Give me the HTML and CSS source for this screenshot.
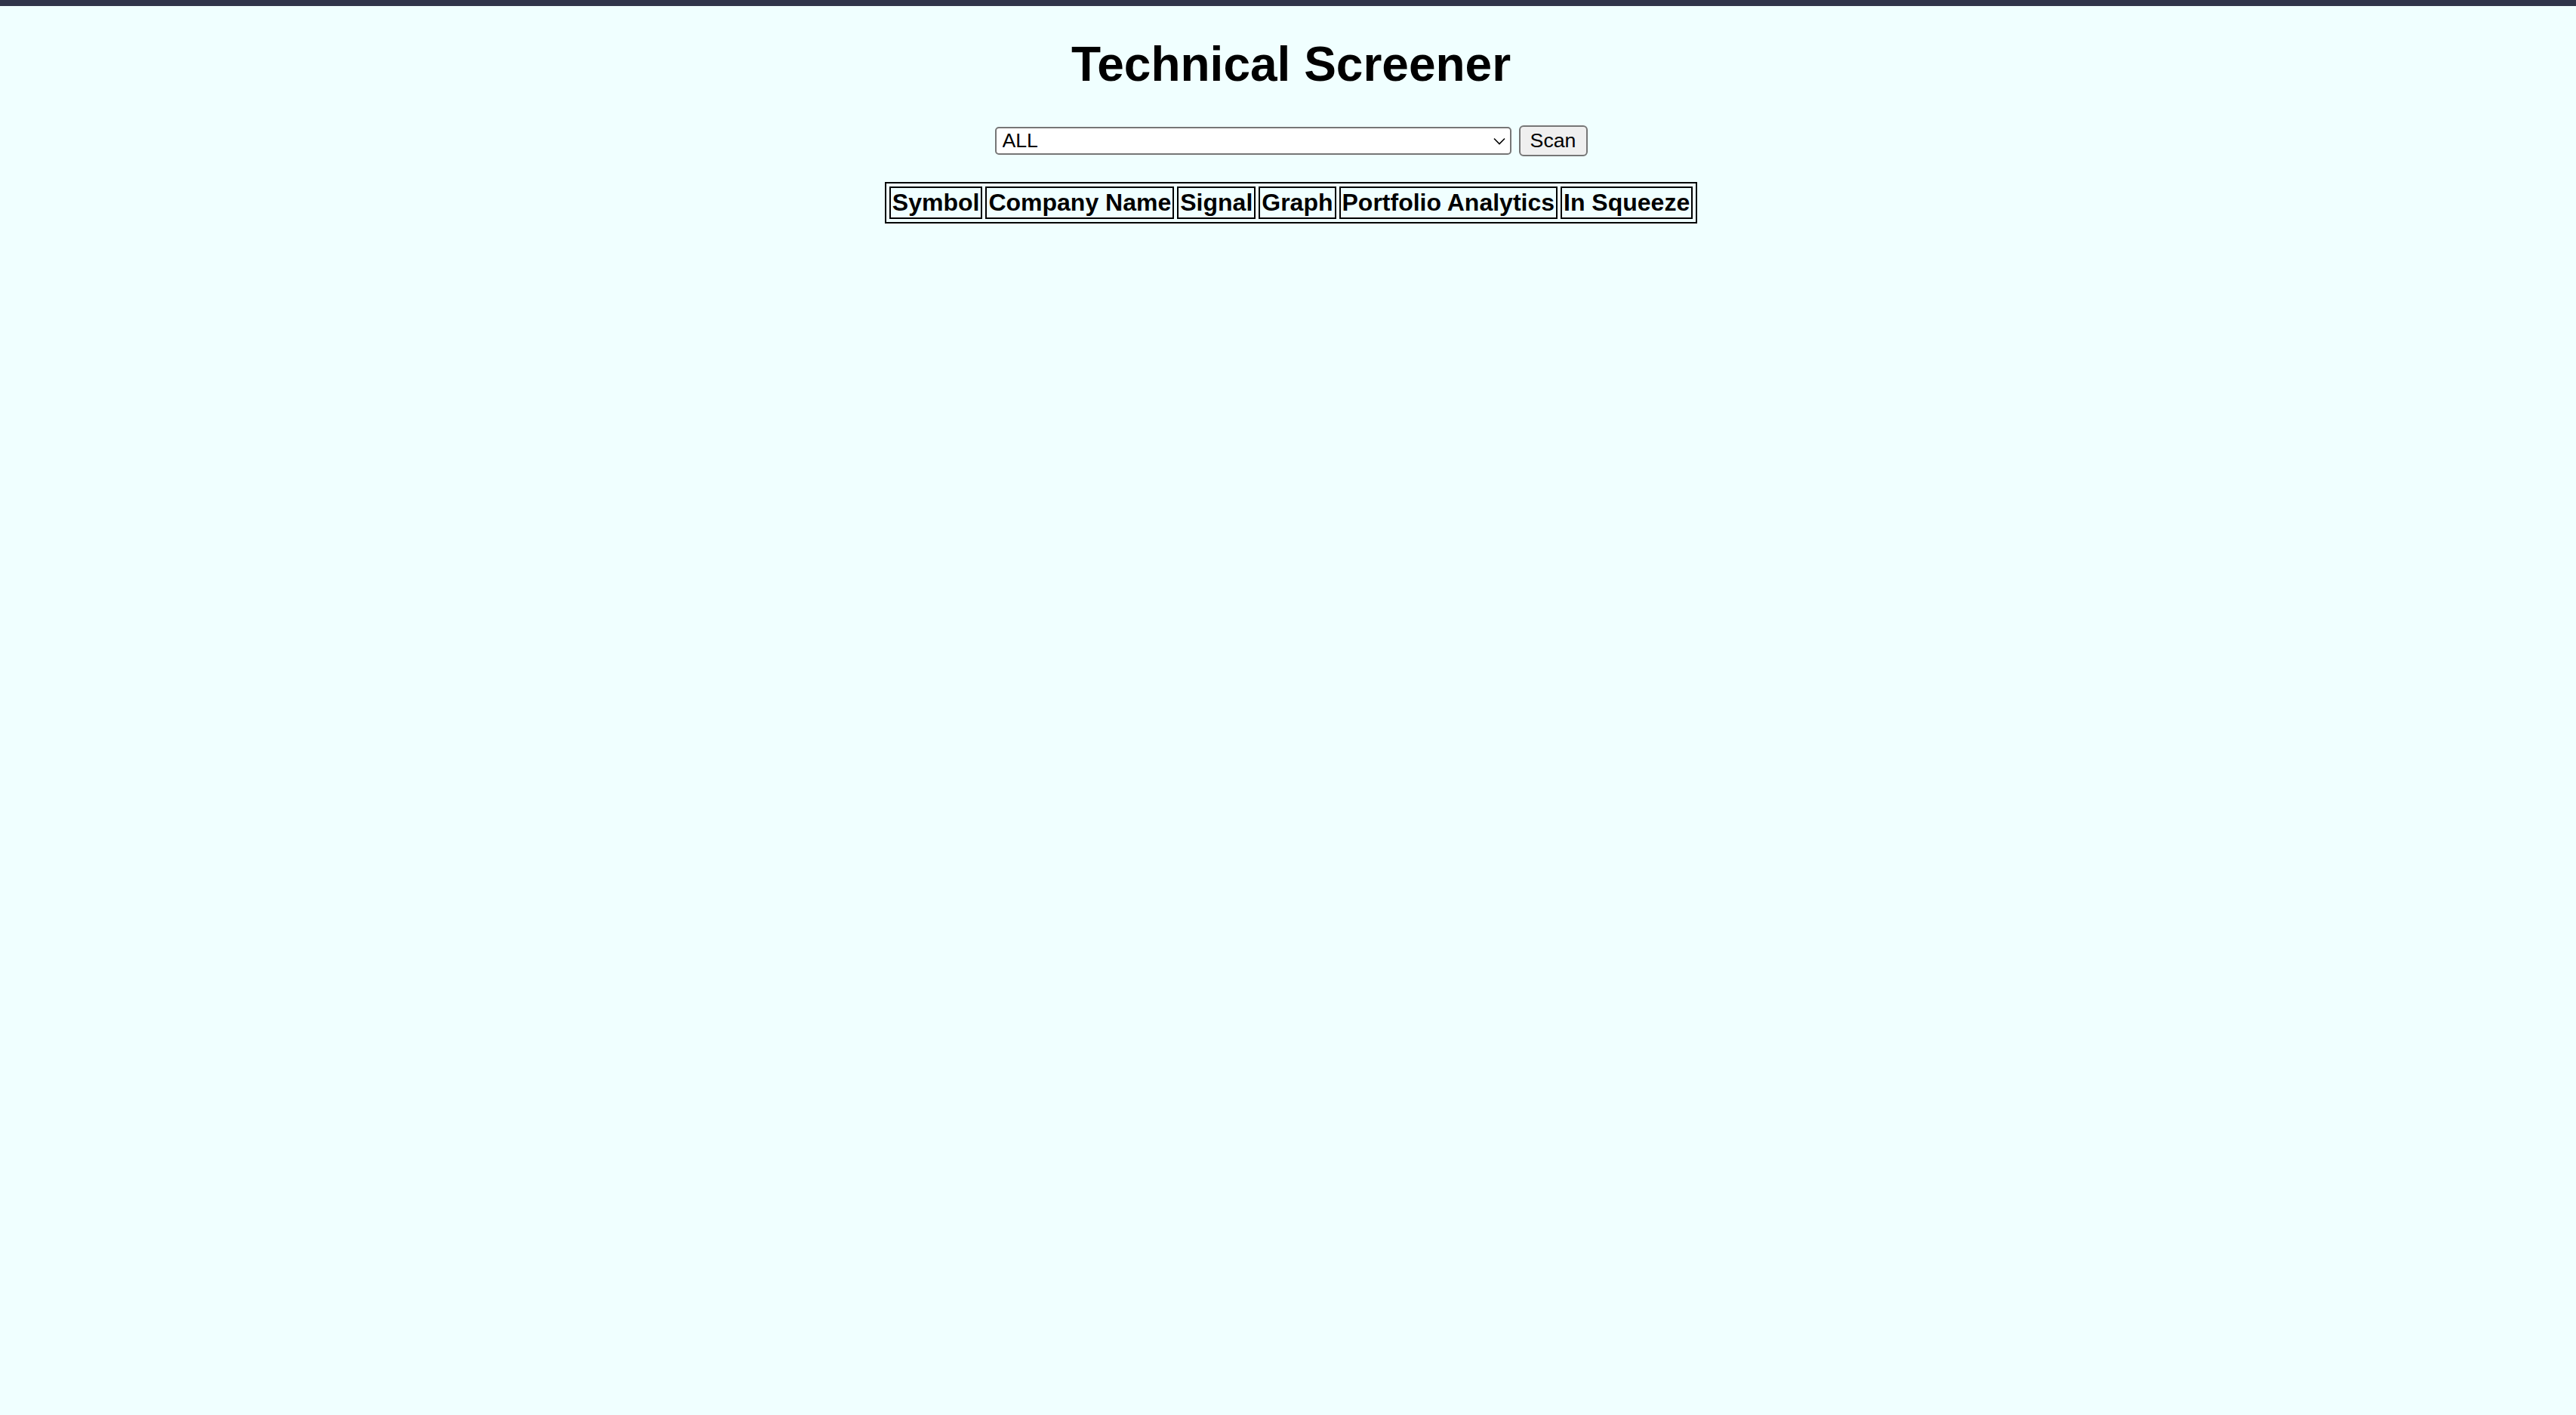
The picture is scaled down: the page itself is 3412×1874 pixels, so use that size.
FILE: index.html
```html
<!DOCTYPE html>
<html lang="en">
<head>
<meta charset="utf-8">
<title>Technical Screener</title>
<link rel="stylesheet" href="styles.css">
</head>
<body>
<div class="topbar"></div>
<main class="page">
  <h1 class="title">Technical Screener</h1>
  <form class="scan-form">
    <div class="select-wrap">
      <select class="pattern-select">
        <option>ALL</option>
      </select>
      <svg class="chevron" width="16" height="10" viewBox="0 0 16 10"><polyline points="1,1.5 8,8.5 15,1.5" fill="none" stroke="#000" stroke-width="1.6"/></svg>
    </div>
    <button type="button" class="scan-btn">Scan</button>
  </form>
  <table class="results">
    <thead>
      <tr>
        <th>Symbol</th>
        <th>Company Name</th>
        <th>Signal</th>
        <th>Graph</th>
        <th>Portfolio Analytics</th>
        <th>In Squeeze</th>
      </tr>
    </thead>
  </table>
</main>
</body>
</html>
```

FILE: styles.css
```css
html, body {
  margin: 0;
  padding: 0;
}
body {
  background: #f0ffff;
  font-family: "Liberation Sans", Arial, sans-serif;
  color: #000;
  min-height: 1874px;
}
.topbar {
  height: 8px;
  background: #31354a;
}
.page {
  padding: 0 8px 0 16px;
}
.title {
  margin: 40px 0 44px;
  font-size: 64px;
  line-height: 74px;
  font-weight: bold;
  text-align: center;
}
.scan-form {
  display: flex;
  justify-content: center;
  align-items: baseline;
  gap: 10px;
  margin: 0;
}
.select-wrap {
  position: relative;
  display: flex;
}
.pattern-select {
  -webkit-appearance: none;
  appearance: none;
  width: 684px;
  height: 37px;
  box-sizing: border-box;
  border: 2px solid #767676;
  border-radius: 5px;
  background: #fff;
  font-family: "Liberation Sans", Arial, sans-serif;
  font-size: 26.67px;
  color: #000;
  padding: 0 0 0 8px;
  margin: 0;
}
.chevron {
  position: absolute;
  right: 8px;
  top: 14px;
  pointer-events: none;
}
.scan-btn {
  height: 41px;
  width: 91px;
  box-sizing: border-box;
  border: 2px solid #767676;
  border-radius: 6px;
  background: #efefef;
  font-family: "Liberation Sans", Arial, sans-serif;
  font-size: 26.67px;
  color: #000;
  padding: 0 12px;
  margin: 0;
}
.results {
  margin: 34px auto 0;
  border: 2px solid #000;
  border-spacing: 4px;
}
.results th {
  border: 2px solid #000;
  padding: 2px;
  font-size: 32px;
  line-height: 35px;
  font-weight: bold;
  text-align: center;
}
```
